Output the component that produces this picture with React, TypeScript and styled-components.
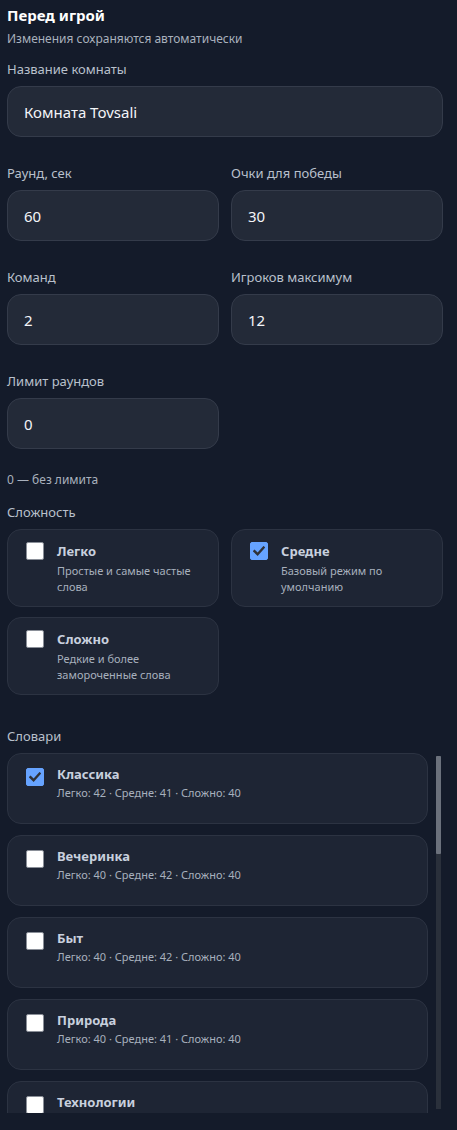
import React, { useLayoutEffect, useRef, useState } from 'react'
import styled, { createGlobalStyle } from 'styled-components'

const GlobalStyle = createGlobalStyle`
  html, body {
    margin: 0;
    padding: 0;
    background: #141b2a;
  }
  body {
    font-family: "Noto Sans", "Open Sans", sans-serif;
    color: #e5e9f0;
  }
`

const Page = styled.div`
  box-sizing: border-box;
  width: 457px;
  min-height: 1130px;
  padding: 5px 14px 17px 7px;
  background: #141b2a;
`

const Title = styled.h1`
  margin: 0;
  font-size: 15px;
  line-height: 20px;
  font-weight: 700;
  color: #ffffff;
`

const Hint = styled.div<{ $top?: number }>`
  margin-top: ${p => p.$top ?? 0}px;
  font-size: 12px;
  line-height: 16px;
  color: #a9b1bd;
`

const Label = styled.div`
  font-size: 13px;
  line-height: 18px;
  color: #b9c0cc;
  margin-bottom: 8px;
`

const Field = styled.div`
  display: flex;
  flex-direction: column;
`

const Section = styled.div<{ $top: number }>`
  margin-top: ${p => p.$top}px;
`

const Row = styled.div`
  display: grid;
  grid-template-columns: 1fr 1fr;
  column-gap: 12px;
  row-gap: 10px;
`

const Input = styled.input`
  box-sizing: border-box;
  width: 100%;
  height: 51px;
  padding: 0 16px;
  border-radius: 14px;
  border: 1px solid #343b4a;
  background: #232a38;
  color: #f3f5f8;
  font-family: inherit;
  font-size: 15px;
  outline: none;
`

const Box = styled.span<{ $on: boolean }>`
  box-sizing: border-box;
  flex: none;
  width: 18px;
  height: 18px;
  border-radius: 2px;
  border: 1px solid ${p => (p.$on ? '#66a3ff' : '#8a8f98')};
  background: ${p => (p.$on ? '#66a3ff' : '#ffffff')};
  display: flex;
  align-items: center;
  justify-content: center;
`

const Card = styled.label<{ $list?: boolean }>`
  box-sizing: border-box;
  flex: none;
  display: flex;
  align-items: flex-start;
  gap: 13px;
  height: ${p => (p.$list ? 71 : 78)}px;
  padding: ${p => (p.$list ? '11px 18px' : '12px 18px')};
  border-radius: 14px;
  border: 1px solid #2c3342;
  background: #1e2534;
  cursor: pointer;
  ${Box} {
    margin-top: ${p => (p.$list ? 3 : 0)}px;
  }
`

const CardText = styled.div`
  display: flex;
  flex-direction: column;
`

const CardTitle = styled.div`
  font-size: 13px;
  line-height: 18px;
  font-weight: 700;
  color: #c8d0de;
`

const CardDesc = styled.div<{ $gap?: number }>`
  margin-top: ${p => p.$gap ?? 3}px;
  font-size: 11px;
  line-height: 16px;
  color: #a7b0bd;
`

const ListFrame = styled.div`
  display: flex;
  gap: 8px;
  width: 434px;
  height: 360px;
`

const Scroller = styled.div`
  flex: 1;
  min-width: 0;
  overflow-y: auto;
  scrollbar-width: none;
  display: flex;
  flex-direction: column;
  gap: 11px;
  &::-webkit-scrollbar {
    display: none;
  }
`

const Track = styled.div`
  position: relative;
  flex: none;
  width: 5px;
  margin: 3px 0 4px;
  background: #2a303b;
`

const Thumb = styled.div`
  position: absolute;
  left: 0;
  right: 0;
  border-radius: 1px;
  background: #6b717c;
`

const Check = () => (
  <svg width="12" height="10" viewBox="0 0 12 10">
    <path d="M1.5 5.2 L4.6 8.2 L10.6 1.6" fill="none" stroke="#2f3136" strokeWidth="2.4" strokeLinecap="square" />
  </svg>
)

const levels = [
  { id: 'easy', title: 'Легко', desc: 'Простые и самые частые слова' },
  { id: 'mid', title: 'Средне', desc: 'Базовый режим по умолчанию' },
  { id: 'hard', title: 'Сложно', desc: 'Редкие и более замороченные слова' },
]

const dictionaries = [
  { name: 'Классика', e: 42, m: 41, h: 40 },
  { name: 'Вечеринка', e: 40, m: 42, h: 40 },
  { name: 'Быт', e: 40, m: 42, h: 40 },
  { name: 'Природа', e: 40, m: 41, h: 40 },
  { name: 'Технологии', e: 40, m: 40, h: 40 },
  { name: 'Еда', e: 41, m: 40, h: 40 },
  { name: 'Спорт', e: 40, m: 40, h: 41 },
  { name: 'Кино и сериалы', e: 40, m: 41, h: 40 },
  { name: 'Музыка', e: 40, m: 40, h: 40 },
  { name: 'Путешествия', e: 41, m: 40, h: 40 },
  { name: 'Профессии', e: 40, m: 40, h: 40 },
  { name: 'Животные', e: 42, m: 40, h: 40 },
  { name: 'История', e: 40, m: 41, h: 40 },
  { name: 'Наука', e: 40, m: 40, h: 42 },
  { name: 'География', e: 40, m: 40, h: 40 },
  { name: 'Искусство', e: 40, m: 41, h: 40 },
]

export default function App() {
  const [level, setLevel] = useState<Record<string, boolean>>({ mid: true })
  const [dicts, setDicts] = useState<Record<string, boolean>>({ 'Классика': true })
  const scrollRef = useRef<HTMLDivElement>(null)
  const trackRef = useRef<HTMLDivElement>(null)
  const [thumb, setThumb] = useState({ top: 0, height: 94 })

  const measure = () => {
    const el = scrollRef.current
    const tr = trackRef.current
    if (!el || !tr) return
    const th = tr.clientHeight
    const h = Math.max(20, (el.clientHeight / el.scrollHeight) * th)
    const max = el.scrollHeight - el.clientHeight
    const top = max > 0 ? (el.scrollTop / max) * (th - h) : 0
    setThumb({ top, height: h })
  }

  useLayoutEffect(measure, [])

  return (
    <Page>
      <GlobalStyle />
      <Title>Перед игрой</Title>
      <Hint $top={6}>Изменения сохраняются автоматически</Hint>

      <Section $top={13}>
        <Field>
          <Label>Название комнаты</Label>
          <Input defaultValue="Комната Tovsali" />
        </Field>
      </Section>

      <Section $top={27}>
        <Row>
          <Field>
            <Label>Раунд, сек</Label>
            <Input defaultValue="60" />
          </Field>
          <Field>
            <Label>Очки для победы</Label>
            <Input defaultValue="30" />
          </Field>
        </Row>
      </Section>

      <Section $top={27}>
        <Row>
          <Field>
            <Label>Команд</Label>
            <Input defaultValue="2" />
          </Field>
          <Field>
            <Label>Игроков максимум</Label>
            <Input defaultValue="12" />
          </Field>
        </Row>
      </Section>

      <Section $top={27}>
        <Row>
          <Field>
            <Label>Лимит раундов</Label>
            <Input defaultValue="0" />
          </Field>
        </Row>
      </Section>

      <Hint $top={23}>0 — без лимита</Hint>

      <Section $top={15}>
        <Label>Сложность</Label>
        <Row>
          {levels.map(l => (
            <Card key={l.id} onClick={() => setLevel({ ...level, [l.id]: !level[l.id] })}>
              <Box $on={!!level[l.id]}>{level[l.id] && <Check />}</Box>
              <CardText>
                <CardTitle>{l.title}</CardTitle>
                <CardDesc>{l.desc}</CardDesc>
              </CardText>
            </Card>
          ))}
        </Row>
      </Section>

      <Section $top={32}>
        <Label>Словари</Label>
        <ListFrame>
          <Scroller ref={scrollRef} onScroll={measure}>
            {dictionaries.map(d => (
              <Card $list key={d.name} onClick={() => setDicts({ ...dicts, [d.name]: !dicts[d.name] })}>
                <Box $on={!!dicts[d.name]}>{dicts[d.name] && <Check />}</Box>
                <CardText>
                  <CardTitle>{d.name}</CardTitle>
                  <CardDesc $gap={2}>
                    Легко: {d.e} · Средне: {d.m} · Сложно: {d.h}
                  </CardDesc>
                </CardText>
              </Card>
            ))}
          </Scroller>
          <Track ref={trackRef}>
            <Thumb style={{ top: thumb.top, height: thumb.height }} />
          </Track>
        </ListFrame>
      </Section>
    </Page>
  )
}
